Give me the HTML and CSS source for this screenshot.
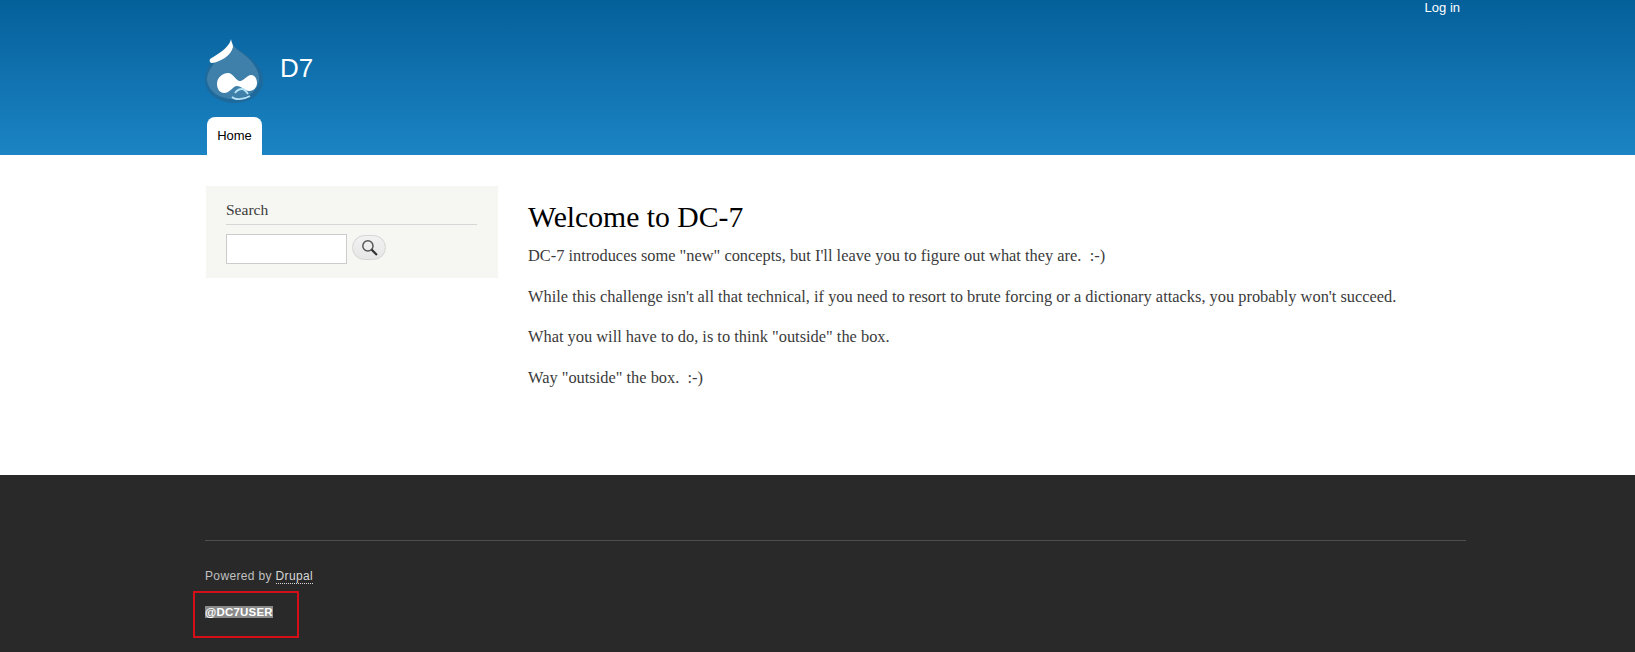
FILE: index.html
```html
<!DOCTYPE html>
<html lang="en">
<head>
  <meta charset="UTF-8">
  <title>Welcome to DC-7 | D7</title>
  <link rel="stylesheet" href="styles.css">
</head>
<body>
<header class="site-header">
  <div class="wrap">
    <div class="user-menu"><a href="#">Log in</a></div>
    <div class="branding">
      <svg class="logo" width="58" height="66" viewBox="0 0 58 66">
        <path d="M26 1C26 8 35 12 43 18C52 25 58 33 58 42C58 56 45 65 29 65C13 65 0 55 0 42C0 28 10 18 18 12C23 9 26 6 26 1Z" fill="#1f6a9c"/>
        <path d="M26 4C30 12 39 15 46 23C51 29 55 36 54 43C52 53 43 60 29 61C14 61 3 53 2 42C2 30 14 21 26 4Z" fill="#3f80aa"/>
        <path d="M26 1C25 7 19 13 5 21C4 23 5 25 7 25C15 24 26 18 28 9C28 6 26 3 26 1Z" fill="#fff"/>
        <path d="M12 46C12 39 18 35 23 35C28 35 31 43 35 43C39 43 42 37 46 37C50 37 52 41 52 45C52 50 48 53 44 53C40 53 36 48 32 48C28 48 25 55 19 55C15 55 12 51 12 46Z" fill="#fff"/>
        <path d="M30 55C32 52 35 51 37 51C39 51 41 53 43 56" fill="none" stroke="#b5e2f5" stroke-width="1.8"/>
        <path d="M27 59C30 62 38 62 45 58" fill="none" stroke="#b5e2f5" stroke-width="1.8"/>
      </svg>
      <a class="site-name" href="#">D7</a>
    </div>
    <nav class="main-menu"><a class="tab" href="#">Home</a></nav>
  </div>
</header>

<main class="wrap content">
  <aside class="sidebar">
    <h2>Search</h2>
    <form class="search-form">
      <input class="search-input" type="text">
      <button class="search-btn" type="button" aria-label="Search">
        <svg width="17" height="17" viewBox="0 0 16 16">
          <circle cx="6.5" cy="6.5" r="4.8" fill="none" stroke="#555" stroke-width="1.4"/>
          <path d="M10 10L15 15" stroke="#333" stroke-width="2"/>
        </svg>
      </button>
    </form>
  </aside>
  <article class="article">
    <h1>Welcome to DC-7</h1>
    <p>DC-7 introduces some "new" concepts, but I'll leave you to figure out what they are.&nbsp; :-)</p>
    <p>While this challenge isn't all that technical, if you need to resort to brute forcing or a dictionary attacks, you probably won't succeed.</p>
    <p>What you will have to do, is to think "outside" the box.</p>
    <p>Way "outside" the box.&nbsp; :-)</p>
  </article>
</main>

<footer class="site-footer">
  <div class="wrap footer-inner">
    <p class="powered">Powered by <a href="#">Drupal</a></p>
    <p class="handle"><span>@DC7USER</span></p>
    <div class="highlight-box"></div>
  </div>
</footer>
</body>
</html>
```

FILE: styles.css
```css
* {
  box-sizing: border-box;
}
body {
  margin: 0;
  font-family: "Liberation Serif", serif;
  background: #fff;
  color: #3b3b3b;
}
a {
  text-decoration: none;
}
.wrap {
  width: 1260px;
  margin-left: 206px;
}
.site-header {
  height: 155px;
  background: linear-gradient(#05609a, #1c84c4);
  font-family: "Liberation Sans", sans-serif;
}
.user-menu {
  display: flex;
  justify-content: flex-end;
  padding-right: 6px;
  height: 38px;
  font-size: 13px;
  line-height: 15px;
}
.user-menu a {
  color: #fff;
}
.branding {
  display: flex;
  align-items: center;
  gap: 17px;
  height: 66px;
}
.logo {
  margin-left: -1px;
}
.site-name {
  color: #fff;
  font-size: 26px;
  margin-top: -5px;
}
.main-menu {
  display: flex;
  margin-top: 13px;
  padding-left: 1px;
}
.tab {
  display: block;
  width: 55px;
  height: 38px;
  background: #fff;
  border-radius: 8px 8px 0 0;
  color: #000;
  font-size: 13px;
  line-height: 37px;
  text-align: center;
}
.content {
  display: flex;
  gap: 29px;
  height: 320px;
  padding-top: 31px;
}
.sidebar {
  flex: none;
  width: 292px;
  height: 92px;
  padding: 15px 21px 0 20px;
  background: #f6f6f2;
}
.sidebar h2 {
  margin: 0 0 9px;
  padding-bottom: 6px;
  border-bottom: 1px solid #d6d6d6;
  font-size: 15.5px;
  font-weight: normal;
  line-height: 17px;
  color: #3b3b3b;
}
.search-form {
  display: flex;
  align-items: flex-start;
  gap: 5px;
}
.search-input {
  width: 121px;
  height: 30px;
  padding: 0 4px;
  border: 1px solid #ccc;
  background: #fff;
}
.search-btn {
  display: flex;
  align-items: center;
  justify-content: center;
  width: 34px;
  height: 25px;
  margin-top: 1px;
  padding: 0;
  border: 1px solid #d5d5d5;
  border-radius: 13px;
  background: linear-gradient(#f2f2f2, #e6e6e6);
}
.article {
  flex: 1;
  padding-left: 1px;
  font-size: 16.4px;
  line-height: 21px;
}
.article h1 {
  margin: 0 0 10px;
  padding-top: 13px;
  color: #000;
  font-size: 29.7px;
  font-weight: normal;
  line-height: 36px;
}
.article p {
  margin: 0 0 19.7px;
}
.site-footer {
  height: 177px;
  background: #292929;
  font-family: "Liberation Sans", sans-serif;
  font-size: 12px;
  letter-spacing: 0.35px;
  color: #c0c0c0;
}
.footer-inner {
  position: relative;
  height: 100%;
  margin-left: 205px;
  width: 1261px;
  padding-top: 65px;
}
.powered {
  margin: 0;
  padding-top: 25px;
  border-top: 1px solid #4f4f4f;
  line-height: 20px;
}
.powered a {
  color: #d8d8d8;
  border-bottom: 1px dotted #d8d8d8;
}
.handle {
  margin: 19px 0 0;
  line-height: 15px;
  font-size: 11.5px;
  font-weight: bold;
  letter-spacing: 0.2px;
  color: #fff;
}
.handle span {
  background: #8a8a8a;
}
/* red annotation drawn on top of the footer */
.highlight-box {
  position: absolute;
  left: -12px;
  top: 116px;
  width: 106px;
  height: 47px;
  border: 2px solid #d40f18;
}
```
